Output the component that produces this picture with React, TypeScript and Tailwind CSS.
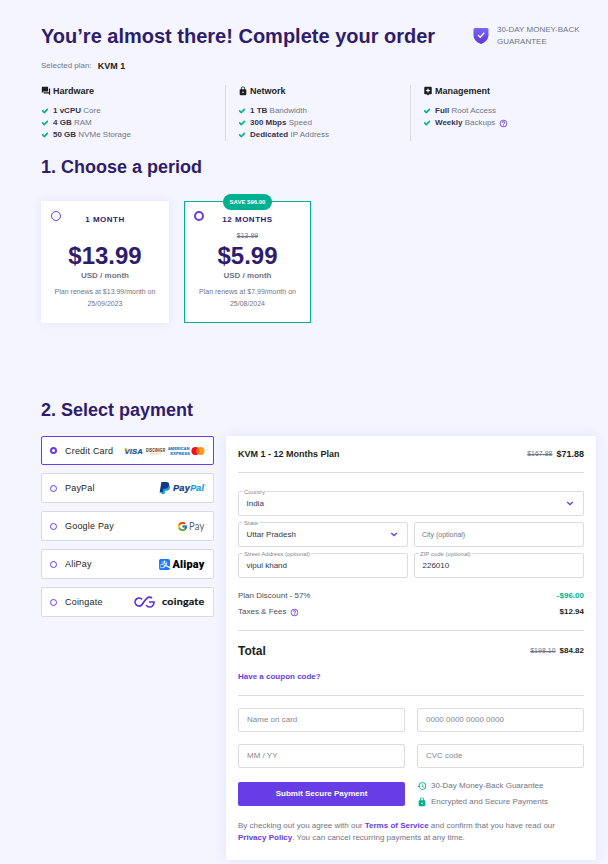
import type { ReactNode } from 'react';
import { FaCheck } from 'react-icons/fa';
import { FcGoogle } from 'react-icons/fc';
import { MdAssistant, MdForum, MdHelpOutline, MdHistory, MdLock } from 'react-icons/md';
import { SiAlipay } from 'react-icons/si';
import clsx from 'clsx';

type Feature = { strong: string; text: string; help?: boolean };

const specs: { title: string; icon: ReactNode; features: Feature[] }[] = [
  {
    title: 'Hardware',
    icon: <MdForum className="size-[10px]" />,
    features: [
      { strong: '1 vCPU', text: 'Core' },
      { strong: '4 GB', text: 'RAM' },
      { strong: '50 GB', text: 'NVMe Storage' },
    ],
  },
  {
    title: 'Network',
    icon: <MdLock className="size-[10px]" />,
    features: [
      { strong: '1 TB', text: 'Bandwidth' },
      { strong: '300 Mbps', text: 'Speed' },
      { strong: 'Dedicated', text: 'IP Address' },
    ],
  },
  {
    title: 'Management',
    icon: <MdAssistant className="size-[10px]" />,
    features: [
      { strong: 'Full', text: 'Root Access' },
      { strong: 'Weekly', text: 'Backups', help: true },
    ],
  },
];

const periods = [
  { label: '1 MONTH', price: '$13.99', renews: '$13.99', date: '25/09/2023' },
  { label: '12 MONTHS', price: '$5.99', old: '$13.99', save: 'SAVE $96.00', renews: '$7.99', date: '25/08/2024', selected: true },
];

const ShieldIcon = () => (
  <svg viewBox="0 0 16 18" className="h-[18px] w-4">
    <defs>
      <linearGradient id="shield" x1="0" y1="0" x2="0" y2="1">
        <stop offset="0" stopColor="#7b68f0" />
        <stop offset="1" stopColor="#5f35e0" />
      </linearGradient>
    </defs>
    <path d="M2 1h12a1.5 1.5 0 0 1 1.5 1.5V8c0 4.5-3 7-7.5 9C3.5 15 .5 12.5.5 8V2.500A1.500 1.500 0 0 1 2 1Z" fill="url(#shield)" />
    <path d="m5 8 2.200 2.200L11.200 5.800" fill="none" stroke="#fff" strokeWidth="1.300" />
  </svg>
);

const Chevron = () => (
  <svg viewBox="0 0 8 5" className="h-[5px] w-2">
    <path d="M1.200 1 4 3.600 6.800 1" fill="none" stroke="#673de6" strokeWidth="1.300" />
  </svg>
);

const CardLogos = () => (
  <svg viewBox="0 0 82 12" className="h-3 w-[82px]" fontFamily="Liberation Sans, sans-serif" fontWeight="bold">
    <text x="1.500" y="9" fontSize="8" fontStyle="italic" fill="#0e4f94" stroke="#0e4f94" strokeWidth=".2" textLength="18.500" lengthAdjust="spacingAndGlyphs">VISA</text>
    <path d="M.5 3.200h3.200l1 2.800Z" fill="#f5a523" />
    <text x="23" y="7" fontSize="4.500" fill="#33302e" textLength="19.500" lengthAdjust="spacingAndGlyphs">DISCOVER</text>
    <circle cx="33.300" cy="5.400" r="1.700" fill="#f47b20" />
    <path d="M27 8.700h11" stroke="#f9c79c" strokeWidth=".8" />
    <text x="45" y="5.300" fontSize="3.500" fill="#1577c5" stroke="#1577c5" strokeWidth=".15" textLength="21.500" lengthAdjust="spacingAndGlyphs">AMERICAN</text>
    <text x="47.500" y="9.700" fontSize="3.200" fill="#1577c5" stroke="#1577c5" strokeWidth=".15" textLength="19.500" lengthAdjust="spacingAndGlyphs">EXPRESS</text>
    <circle cx="72.500" cy="6" r="4.100" fill="#eb1020" />
    <circle cx="77.500" cy="6" r="4.100" fill="#f99f1b" />
    <path d="M75 2.750a4.100 4.100 0 0 1 0 6.500 4.100 4.100 0 0 1 0-6.500Z" fill="#f26122" />
  </svg>
);

const PayPalLogo = () => (
  <svg viewBox="0 0 46 14" className="h-3.5 w-[46px]">
    <path d="M4 3.500h5c1.600.5 2.300 1.700 1.900 3.400-.5 2.100-2 2.900-4 2.900h-.8L5.500 13H2.500Z" fill="#1a9bdc" />
    <path d="M2.400 1h4.700c2.200 0 3.300 1.200 2.900 3.200C9.600 6.500 8 7.700 5.600 7.700H4.200L3.400 11.500H.6Z" fill="#123984" />
    <g fontFamily="Liberation Sans, sans-serif" fontSize="9" fontWeight="bold" fontStyle="italic" strokeWidth=".2">
      <text x="14" y="10" fill="#123984" stroke="#123984" textLength="17" lengthAdjust="spacingAndGlyphs">Pay</text>
      <text x="31.200" y="10" fill="#1a9bdc" stroke="#1a9bdc" textLength="14" lengthAdjust="spacingAndGlyphs">Pal</text>
    </g>
  </svg>
);

const GooglePayLogo = () => (
  <span className="flex items-center">
    <FcGoogle className="size-[11px]" />
    <svg viewBox="0 0 17 14" className="h-3.5 w-[17px]">
      <text x="1" y="10.500" fontFamily="Lato, sans-serif" fontSize="10.500" fill="#5f6368" textLength="15.500" lengthAdjust="spacingAndGlyphs">Pay</text>
    </svg>
  </span>
);

const AlipayLogo = () => (
  <span className="flex items-center gap-0.5">
    <SiAlipay className="size-[11px] text-[#1677ff]" />
    <svg viewBox="0 0 33 18" className="h-[18px] w-[33px]">
      <text x="0.500" y="12.500" fontFamily="Roboto, sans-serif" fontSize="11.500" fontWeight="900" fill="#000" textLength="32" lengthAdjust="spacingAndGlyphs">Alipay</text>
    </svg>
  </span>
);

const CoingateLogo = () => (
  <svg viewBox="0 0 71 14" className="h-3.5 w-[71px]">
    <g fill="none" stroke="#5a2fe0" strokeWidth="1.700">
      <path d="M8 4.300A4 4 0 1 0 7.500 10.200C9.500 8 11 4.500 13 3.200a4 4 0 0 1 5-.2" />
      <path d="M15 7h5c0 3-2 5-4.300 5a3.500 3.500 0 0 1-3.400-2" />
    </g>
    <text x="28" y="10" fontFamily="Lato, sans-serif" fontSize="9.500" fontWeight="bold" fill="#111" stroke="#111" strokeWidth=".2" textLength="42.500" lengthAdjust="spacingAndGlyphs">coingate</text>
  </svg>
);

const methods = [
  { name: 'Credit Card', logo: <CardLogos />, selected: true },
  { name: 'PayPal', logo: <PayPalLogo /> },
  { name: 'Google Pay', logo: <GooglePayLogo /> },
  { name: 'AliPay', logo: <AlipayLogo /> },
  { name: 'Coingate', logo: <CoingateLogo /> },
];

type FieldProps = { label?: string; value: string; select?: boolean; small?: boolean };

const Field = ({ label, value, select, small }: FieldProps) => (
  <div className="relative flex h-[25px] items-center justify-between rounded-[2px] border border-[#dadce0] pr-[9px] pl-[7px]">
    {label && <span className="absolute -top-1 left-1 bg-white px-px text-[6px] leading-[8px] text-[#85878f]">{label}</span>}
    <span className={small ? 'text-[7px] text-[#727586]' : 'pl-[0.5px] text-[8px] text-[#36344d]'}>{value}</span>
    {select && <Chevron />}
  </div>
);

const CardInput = ({ text }: { text: string }) => (
  <div className="flex h-6 items-center rounded-[2px] border border-[#dadce0] px-2 text-[8px] text-[#85878f]">{text}</div>
);

export default function App() {
  return (
    <main className="h-[864px] w-[608px] overflow-hidden bg-[#f4f5ff] pt-6 pl-[41px] font-['Liberation_Sans',Arial,sans-serif] text-[8px] leading-[12px] text-[#727586]">
      <header className="flex h-6 items-center">
        <h1 className="w-[432px] text-[20px] leading-6 font-bold whitespace-nowrap text-[#2f1c6a]">
          You’re almost there! Complete your order
        </h1>
        <ShieldIcon />
        <p className="ml-2 w-[90px]">30-DAY MONEY-BACK GUARANTEE</p>
      </header>

      <p className="mt-3 flex h-3 items-center gap-1.5">
        Selected plan: <strong className="text-[9px] text-[#1d1e20]">KVM 1</strong>
      </p>

      <section className="mt-[13px] flex h-14">
        {specs.map((spec) => (
          <div key={spec.title} className="w-[185px] border-r border-[#dadce0] pl-3 first:pl-0 last:border-r-0">
            <h3 className="mb-2 flex h-3 items-center gap-0.5 text-[9px] font-bold text-[#1d1e20]">
              {spec.icon}
              {spec.title}
            </h3>
            <ul>
              {spec.features.map((f) => (
                <li key={f.strong} className="flex h-3 items-center">
                  <FaCheck className="mr-[5px] ml-px size-[6px] text-[#00b090]" stroke="currentColor" strokeWidth={60} />
                  <span>
                    <b className="text-[#36344d]">{f.strong}</b> {f.text}
                  </span>
                  {f.help && <MdHelpOutline className="ml-1 size-[9px] text-[#673de6]" />}
                </li>
              ))}
            </ul>
          </div>
        ))}
      </section>

      <h2 className="mt-[14px] text-[18px] leading-6 font-bold text-[#2f1c6a]">1. Choose a period</h2>
      <section className="mt-[22px] flex gap-[15px]">
        {periods.map((p) => (
          <div
            key={p.label}
            className={clsx(
              'relative h-[122px] border bg-white pt-3 text-center',
              p.selected ? 'w-[127px] border-[#00b090]' : 'w-32 border-white shadow-[0_0_8px_rgba(103,61,230,0.1)]',
            )}>
            {p.save && (
              <span className="absolute -top-2 left-[38px] flex h-4 w-[49px] items-center justify-center rounded-full bg-[#00b090] text-[6px] font-bold text-white">
                {p.save}
              </span>
            )}
            <span
              className={clsx(
                'absolute top-[9px] left-[9px] size-[10px] rounded-full border-[#673de6]',
                p.selected ? 'border-[2.5px]' : 'border',
              )}
            />
            <h4 className="font-bold tracking-[0.5px] text-[#2f1c6a]">{p.label}</h4>
            <del className="mt-1 block h-3 text-[7px]">{p.old}</del>
            <div className="mt-px text-[24px] leading-[26px] font-bold text-[#2f1c6a]">{p.price}</div>
            <div className="mt-px font-bold">USD / month</div>
            <p className="mx-auto mt-1 w-[110px] text-[7px]">
              Plan renews at {p.renews}/month on {p.date}
            </p>
          </div>
        ))}
      </section>

      <h2 className="mt-[75px] text-[18px] leading-6 font-bold text-[#2f1c6a]">2. Select payment</h2>
      <section className="mt-[14px] flex items-start gap-3">
        <div className="flex w-[173px] flex-col gap-2">
          {methods.map((m) => (
            <div
              key={m.name}
              className={clsx(
                'flex items-center rounded-[2px] border bg-white px-2 text-[9px] tracking-[0.2px] text-[#1d1e20]',
                m.selected ? 'h-[29px] border-[#673de6]' : 'h-[30px] border-[#dadce0]',
              )}>
              <span className={clsx('mr-2 size-[7px] rounded-full border-[#673de6]', m.selected ? 'border-2' : 'border')} />
              <span className="flex-1">{m.name}</span>
              {m.logo}
            </div>
          ))}
        </div>

        <div className="h-[424px] w-[370px] rounded-[2px] bg-white px-3 pt-3 shadow-[0_0_12px_rgba(103,61,230,0.1)]">
          <div className="flex h-3 items-center justify-between text-[9px] font-bold text-[#1d1e20]">
            KVM 1 - 12 Months Plan
            <span className="flex items-center gap-1">
              <del className="text-[7px] font-normal text-[#727586]">$167.88</del>$71.88
            </span>
          </div>
          <hr className="mt-3 mb-[18px] border-[#dadce0]" />

          <div className="grid grid-cols-2 gap-1.5">
            <div className="col-span-2">
              <Field label="Country" value="India" select />
            </div>
            <Field label="State" value="Uttar Pradesh" select />
            <Field value="City (optional)" small />
            <Field label="Street Address (optional)" value="vipul khand" />
            <Field label="ZIP code (optional)" value="226010" />
          </div>

          <div className="mt-3 flex flex-col gap-1 text-[#4e4f58]">
            <p className="flex justify-between">
              Plan Discount - 57% <b className="text-[#00b090]">-$96.00</b>
            </p>
            <p className="flex justify-between">
              <span className="flex items-center gap-1">
                Taxes &amp; Fees <MdHelpOutline className="size-[9px] text-[#673de6]" />
              </span>
              <b className="text-[#1d1e20]">$12.94</b>
            </p>
          </div>
          <hr className="mt-3 mb-[13px] border-[#dadce0]" />

          <div className="flex h-3.5 items-center justify-between text-[#1d1e20]">
            <b className="text-[12px]">Total</b>
            <span className="flex items-center gap-1">
              <del className="text-[7px] text-[#727586]">$198.10</del>
              <b>$84.82</b>
            </span>
          </div>
          <a className="mt-[13px] block font-bold text-[#673de6]">Have a coupon code?</a>
          <hr className="my-3 border-[#dadce0]" />

          <div className="grid grid-cols-2 gap-3">
            <CardInput text="Name on card" />
            <CardInput text="0000 0000 0000 0000" />
            <CardInput text="MM / YY" />
            <CardInput text="CVC code" />
          </div>

          <div className="mt-[14px] grid grid-cols-2 gap-3">
            <button className="h-6 rounded-[2px] bg-[#673de6] text-[8px] font-bold text-white">Submit Secure Payment</button>
            <div className="-mt-0.5 flex flex-col gap-1">
              <p className="flex items-center gap-1">
                <MdHistory className="size-[10px] text-[#00b090]" /> 30-Day Money-Back Guarantee
              </p>
              <p className="flex items-center gap-1">
                <MdLock className="size-[10px] text-[#00b090]" /> Encrypted and Secure Payments
              </p>
            </div>
          </div>

          <p className="mt-3">
            By checking out you agree with our <b className="text-[#673de6]">Terms of Service</b> and confirm that you have read our{' '}
            <b className="text-[#673de6]">Privacy Policy</b>. You can cancel recurring payments at any time.
          </p>
        </div>
      </section>
    </main>
  );
}
